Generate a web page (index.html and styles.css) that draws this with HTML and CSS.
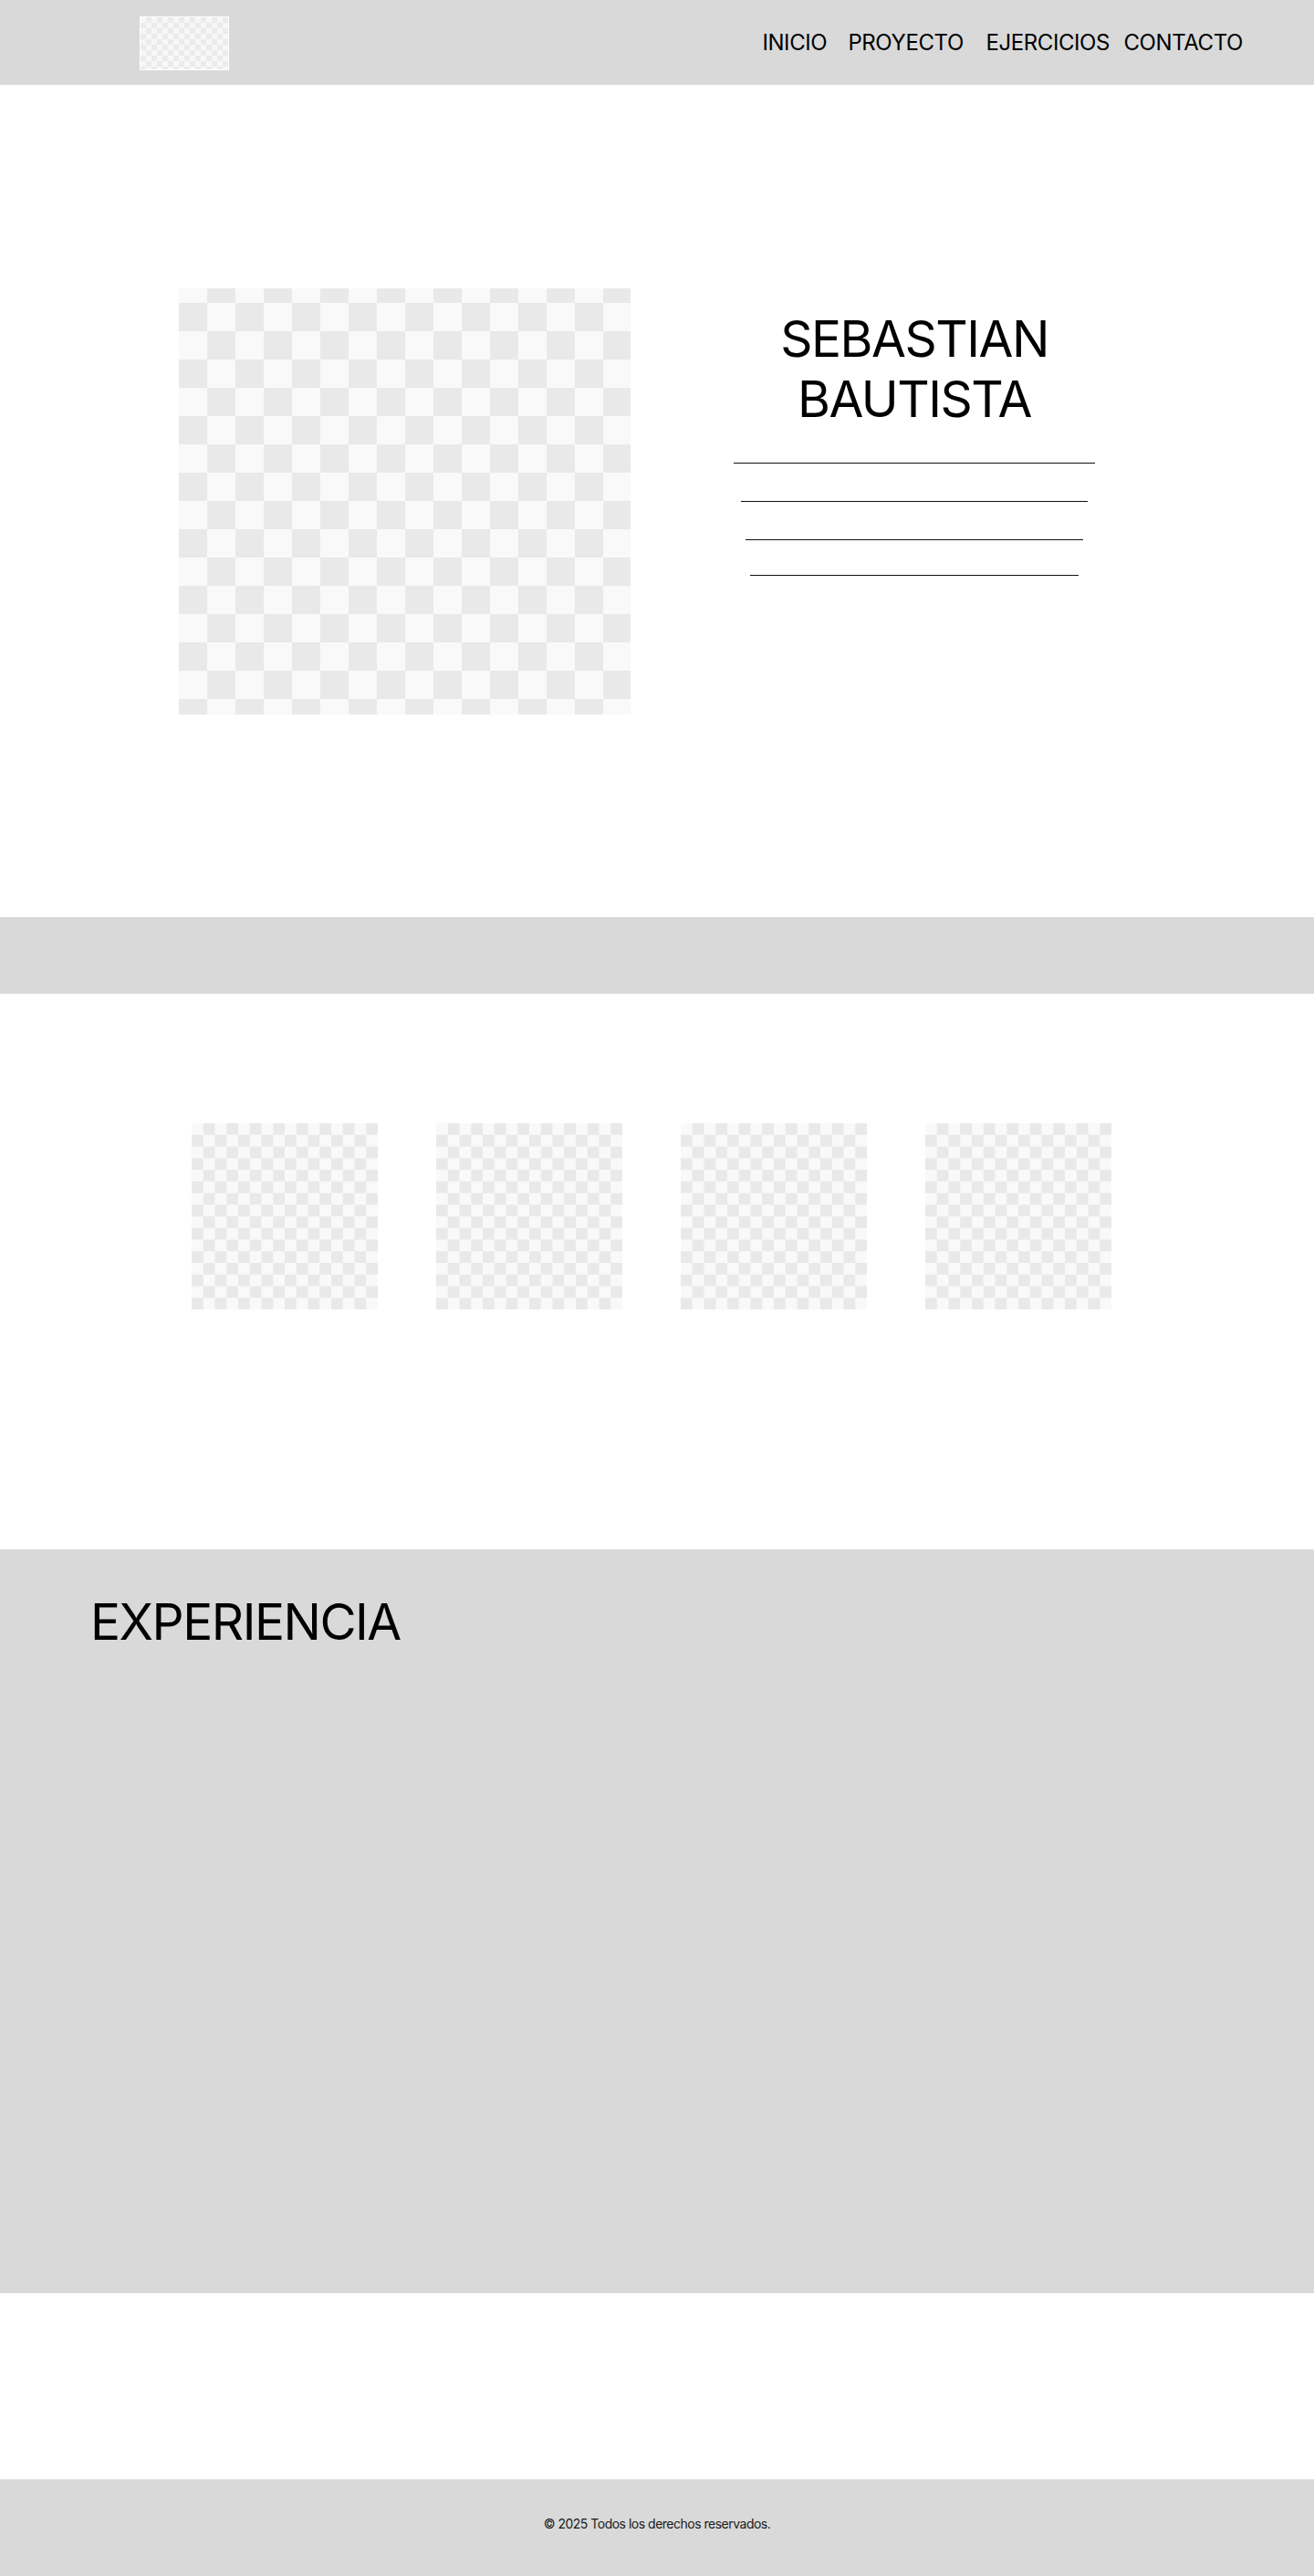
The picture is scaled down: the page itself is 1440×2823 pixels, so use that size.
FILE: index.html
```html
<!doctype html>
<html lang="es">
<head>
  <meta charset="utf-8" />
  <meta name="viewport" content="width=device-width,initial-scale=1" />
  <title>Sebastian Bautista — Portafolio</title>
  <link rel="stylesheet" href="styles.css">
</head>
<body>

<header class="site-header">
  <div class="logo checker-xs"></div>
  <nav class="nav">
    <a href="#inicio">INICIO</a>
    <a href="#proyecto">PROYECTO</a>
    <a href="#ejercicios">EJERCICIOS</a>
    <a href="#contacto">CONTACTO</a>
  </nav>
</header>

<section class="hero" id="inicio">
  <div class="hero-photo checker-lg"></div>
  <div class="hero-info">
    <h1 class="hero-name">SEBASTIAN<br>BAUTISTA</h1>
    <div class="hero-lines">
      <span class="line l1"></span>
      <span class="line l2"></span>
      <span class="line l3"></span>
      <span class="line l4"></span>
    </div>
  </div>
</section>

<div class="band"></div>

<section class="projects" id="proyecto">
  <div class="project-grid">
    <div class="thumb checker-sm"></div>
    <div class="thumb checker-sm"></div>
    <div class="thumb checker-sm"></div>
    <div class="thumb checker-sm"></div>
  </div>
</section>

<section class="experience" id="ejercicios">
  <h2 class="section-title">EXPERIENCIA</h2>
</section>

<section class="blank" id="contacto"></section>

<footer class="site-footer">
  <p>© 2025 Todos los derechos reservados.</p>
</footer>

</body>
</html>
```

FILE: styles.css
```css
:root{
  --grey:#d9d9d9;
  --ink:#000;
  --check-a:#e9e9e9;
  --check-b:#f9f9f9;
}

*{box-sizing:border-box;margin:0;padding:0}

body{
  font-family:'Inter','Noto Sans',sans-serif;
  color:var(--ink);
  background:#fff;
}

/* checker placeholders */
.checker-lg{
  background:repeating-conic-gradient(var(--check-a) 0 25%, var(--check-b) 0 50%) 0 -15px / 62px 62px;
}
.checker-sm{
  background:repeating-conic-gradient(var(--check-a) 0 25%, var(--check-b) 0 50%) 0 0 / 25.5px 25.5px;
}
.checker-xs{
  background:repeating-conic-gradient(#ebebeb 0 25%, #f7f7f7 0 50%) 0 0 / 12px 12px;
}

/* header */
.site-header{
  height:93px;
  background:var(--grey);
  display:flex;
  align-items:center;
  justify-content:space-between;
  padding:0 78px 0 153px;
}

.logo{
  width:98px;height:59px;
  border:1px solid #fff;
  margin-top:1px;
}

.nav{
  display:grid;
  grid-template-columns:94px 151px 151px auto;
  align-items:center;
}

.nav a{
  color:var(--ink);
  text-decoration:none;
  font-size:24px;
  line-height:1;
  font-weight:400;
  letter-spacing:-0.4px;
}

/* hero */
.hero{
  height:912px;
  display:flex;
  align-items:flex-start;
  gap:111px;
  padding:223px 0 0 196px;
}

.hero-photo{
  width:495px;
  height:467px;
  flex-shrink:0;
}

.hero-info{
  width:400px;
  margin-top:22px;
  display:flex;
  flex-direction:column;
  align-items:center;
}

.hero-name{
  font-size:55px;
  line-height:66px;
  font-weight:400;
  text-align:center;
  letter-spacing:-1.5px;
}

.hero-lines{
  display:flex;
  flex-direction:column;
  align-items:center;
  margin-top:37px;
}

.line{display:block;height:1px;background:#111}
.l1{width:396px}
.l2{width:380px;margin-top:41px}
.l3{width:370px;margin-top:41px}
.l4{width:360px;margin-top:38px}

.band{
  height:84px;
  background:var(--grey);
}

/* projects */
.projects{
  height:609px;
  padding:142px 0 0 210px;
}

.project-grid{
  display:flex;
  gap:64px;
}

.thumb{
  width:204px;
  height:204px;
}

/* experience */
.experience{
  height:815px;
  background:var(--grey);
  padding:46px 0 0 99px;
}

.section-title{
  font-size:55px;
  line-height:66px;
  font-weight:400;
  letter-spacing:-1.5px;
}

.blank{height:204px}

/* footer */
.site-footer{
  height:106px;
  background:var(--grey);
  display:flex;
  align-items:center;
  justify-content:center;
  padding-bottom:10px;
}

.site-footer p{
  font-size:14px;
  letter-spacing:-0.5px;
  color:#1a1a1a;
}
```
